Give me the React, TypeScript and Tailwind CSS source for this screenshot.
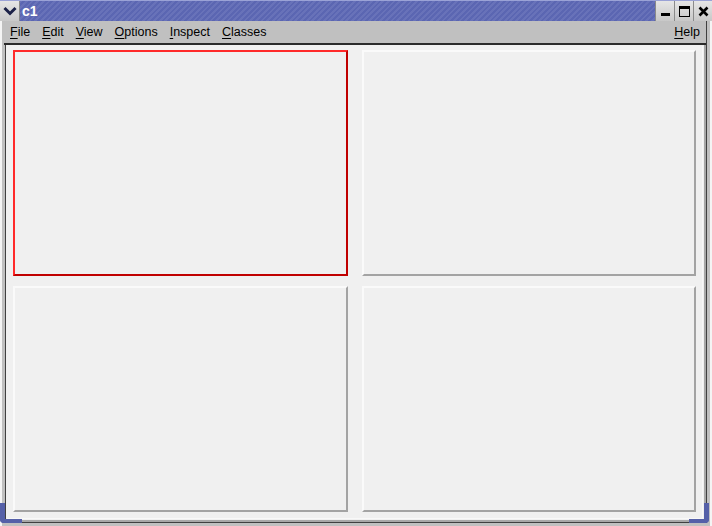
const menus = ["File", "Edit", "View", "Options", "Inspect", "Classes"]

const MenuItem = ({ label }: { label: string }) => (
  <span className="px-[6px]">
    <span className="underline underline-offset-2">{label[0]}</span>
    {label.slice(1)}
  </span>
)

const Pad = ({ active = false }: { active?: boolean }) => (
  <div
    className={
      active
        ? "border-2 border-t-[#ff2a2a] border-l-[#ff2a2a] border-b-[#c00000] border-r-[#c00000] bg-[#f0f0f0]"
        : "border-2 border-t-[#fafafa] border-l-[#fafafa] border-b-[#a3a3a3] border-r-[#a3a3a3] bg-[#f0f0f0]"
    }
  />
)

const TitleButton = ({ children }: { children: React.ReactNode }) => (
  <div className="w-[19px] flex items-center justify-center bg-[linear-gradient(#e6e6e6,#c8c8c8)] border-l border-[#8a8a8a]">
    {children}
  </div>
)

export default function App() {
  return (
    <div className="relative w-[712px] h-[526px] flex flex-col bg-[#c0c0c0] font-['Liberation_Sans',Arial,sans-serif] overflow-hidden">
      {/* title bar */}
      <div className="h-[21px] flex items-stretch bg-[repeating-linear-gradient(135deg,#5b66b2_0px,#5b66b2_2px,#6872b9_2px,#6872b9_4px)] border-t border-[#9aa2d6]">
        <div className="w-[20px] flex items-center justify-center bg-[linear-gradient(#e6e6e6,#c8c8c8)] border-r border-[#8a8a8a]">
          <svg width="14" height="10" viewBox="0 0 14 10">
            <path d="M1.5 2 L7 7.5 L12.5 2" fill="none" stroke="#1c2248" strokeWidth="3" />
          </svg>
        </div>
        <div className="flex-1 flex items-center pl-[2px] text-white font-bold text-[14px]">c1</div>
        <TitleButton>
          <div className="w-[9px] h-[3px] bg-black mt-[7px]" />
        </TitleButton>
        <TitleButton>
          <div className="w-[11px] h-[11px] border border-black border-t-[3px]" />
        </TitleButton>
        <TitleButton>
          <svg width="11" height="11" viewBox="0 0 11 11">
            <path d="M1.5 1.5 L9.5 9.5 M9.5 1.5 L1.5 9.5" stroke="black" strokeWidth="2.6" />
          </svg>
        </TitleButton>
      </div>

      {/* window body */}
      <div className="flex-1 flex flex-col border-l-2 border-r-2 border-[#f4f4f4] px-[3px] pb-[3px] min-h-0">
        <div className="flex-1 flex flex-col border-l border-r border-b border-[#404040] min-h-0">
          {/* menu bar */}
          <div className="h-[24px] flex items-center bg-[#c0c0c0] text-[12.5px] text-black -ml-[2px] border-b-2 border-[#2a2a2a]">
            {menus.map(m => (
              <MenuItem key={m} label={m} />
            ))}
            <div className="flex-1" />
            <MenuItem label="Help" />
          </div>

          {/* canvas */}
          <div className="flex-1 bg-[#f0f0f0] border-r-2 border-b-2 border-[#a8a8a8] p-[1px] min-h-0">
            <div className="h-full border-r border-b border-[#f8f8f8] px-[6px] pt-[4px] grid grid-cols-2 grid-rows-[226px_226px] gap-x-[14px] gap-y-[10px]">
              <Pad active />
              <Pad />
              <Pad />
              <Pad />
            </div>
          </div>
        </div>
      </div>

      {/* blue resize corners */}
      <div className="absolute left-0 bottom-[3px] w-[5px] h-[20px] bg-[#5560a8] rounded-bl-[4px]" />
      <div className="absolute left-0 bottom-[3px] w-[22px] h-[4px] bg-[#5560a8] rounded-bl-[4px]" />
      <div className="absolute right-[3px] bottom-[3px] w-[5px] h-[20px] bg-[#5560a8] rounded-br-[4px]" />
      <div className="absolute right-[3px] bottom-[3px] w-[20px] h-[4px] bg-[#5560a8] rounded-br-[4px]" />
    </div>
  )
}
